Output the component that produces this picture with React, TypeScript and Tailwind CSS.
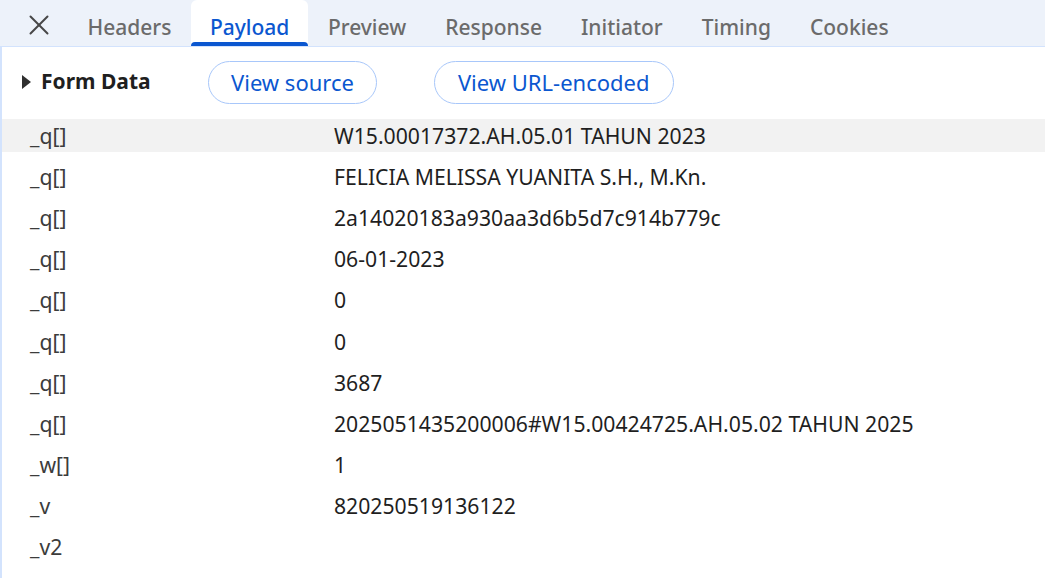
import { X } from "lucide-react";

const tabs = ["Headers", "Payload", "Preview", "Response", "Initiator", "Timing", "Cookies"];

const rows: [string, string][] = [
  ["_q[]", "W15.00017372.AH.05.01 TAHUN 2023"],
  ["_q[]", "FELICIA MELISSA YUANITA S.H., M.Kn."],
  ["_q[]", "2a14020183a930aa3d6b5d7c914b779c"],
  ["_q[]", "06-01-2023"],
  ["_q[]", "0"],
  ["_q[]", "0"],
  ["_q[]", "3687"],
  ["_q[]", "2025051435200006#W15.00424725.AH.05.02 TAHUN 2025"],
  ["_w[]", "1"],
  ["_v", "820250519136122"],
  ["_v2", ""],
];

const App = () => {
  return (
    <div
      className="w-[1045px] h-[578px] overflow-hidden bg-white flex flex-col"
      style={{ fontFamily: '"Noto Sans", "Open Sans", sans-serif' }}
    >
      <div className="flex items-end h-[47px] bg-[#edf2fa] border-b border-[#d3e3fd] pl-[22px] shrink-0">
        <div className="flex items-center h-full pt-[3px] pr-[12px] text-[#474747]">
          <X size={34} strokeWidth={1.4} />
        </div>
        {tabs.map((t) =>
          t === "Payload" ? (
            <div
              key={t}
              className="relative flex items-center h-[46px] pt-[10px] px-[19px] bg-white rounded-t-[6px] text-[21px] font-medium text-[#0b57d0]"
            >
              {t}
              <div className="absolute left-0 right-0 bottom-0 h-[4px] rounded-t-[4px] bg-[#0b57d0]" />
            </div>
          ) : (
            <div
              key={t}
              className="flex items-center h-[46px] pt-[10px] px-[19.5px] text-[21px] font-medium text-[#6b6b6b]"
            >
              {t}
            </div>
          )
        )}
      </div>
      <div className="flex-1 flex flex-col border-l-2 border-[#d3e3fd]">
        <div className="flex items-center h-[72px] pl-[20px] pb-[2px]">
          <div className="flex items-center gap-[10px] w-[186px]">
            <svg width="9" height="14" viewBox="0 0 9 14">
              <path d="M0 0 L9 7 L0 14 Z" fill="#303030" />
            </svg>
            <span className="text-[21px] font-bold text-[#1f1f1f]">Form Data</span>
          </div>
          <button className="h-[43px] px-[22px] rounded-full border border-[#a8c7fa] text-[22px] text-[#0b57d0]">
            View source
          </button>
          <button className="ml-[57px] h-[43px] px-[23px] rounded-full border border-[#a8c7fa] text-[22px] text-[#0b57d0]">
            View URL-encoded
          </button>
        </div>
        <div className="flex flex-col gap-[8.2px]">
          {rows.map(([k, v], i) => (
            <div
              key={i}
              className={`flex items-center h-[33px] text-[21.2px] ${i === 0 ? "bg-[#f2f2f2]" : ""}`}
            >
              <span className="w-[332px] pl-[28px] text-[#3c3c3c]">{k}</span>
              <span className="text-[#1f1f1f]">{v}</span>
            </div>
          ))}
        </div>
      </div>
    </div>
  );
};

export default App;
